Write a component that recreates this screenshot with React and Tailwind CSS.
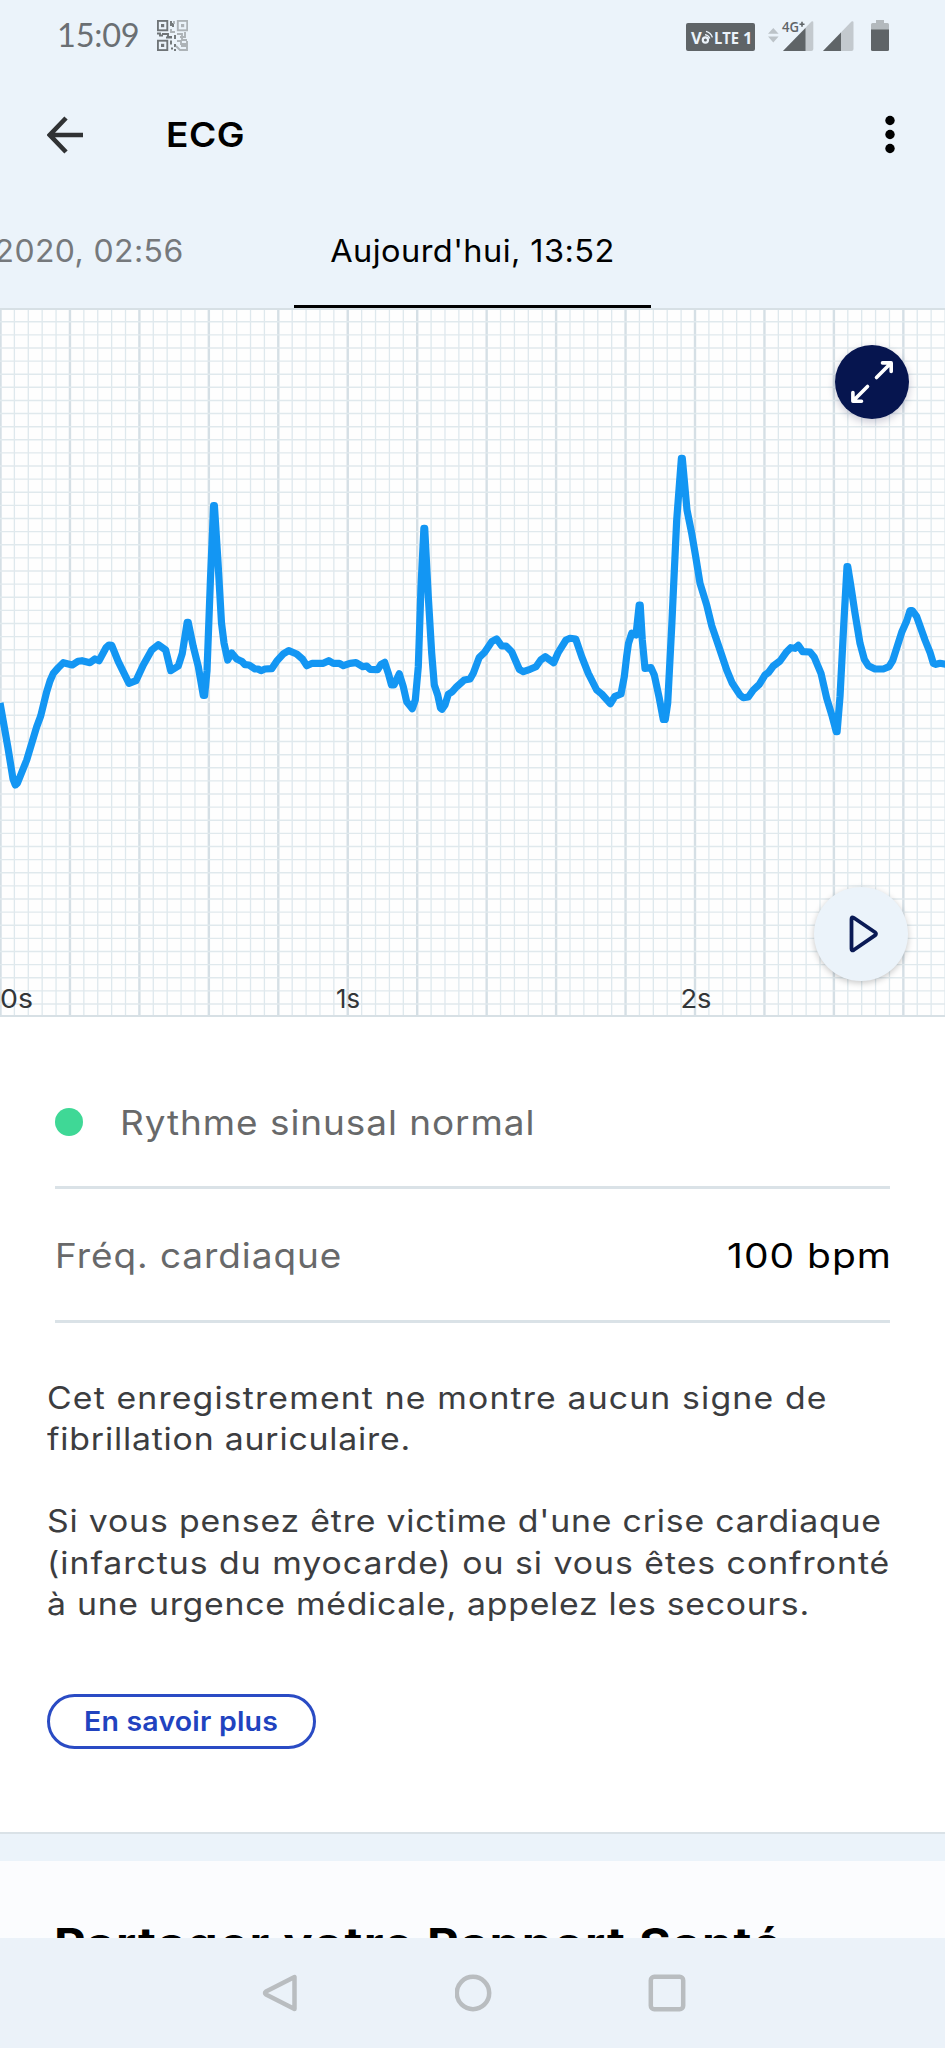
import { useState } from 'react';

// [x, y] samples of the trace, in chart pixels
const SAMPLES = [
  [0, 395], [8, 440], [13, 471], [15.3, 477], [17.5, 475], [26.7, 452], [36.7, 418.7], [40.7, 408], [46.7, 383.7],
  [50, 373], [53.3, 365.3], [58, 360], [63.3, 354.7], [72.3, 357], [78, 353.3], [82, 352.7], [90, 354.7], [95, 351],
  [99, 352.7], [106, 339.7], [109, 337], [111.7, 337.3], [118.3, 353.7], [129, 375.3], [136, 372.7],
  [143.3, 357], [151.7, 342], [158.3, 336.7], [165.7, 342], [170.7, 362.7], [178.3, 358],
  [182.3, 345.3], [187.2, 314.3], [188.2, 314.3], [193.3, 338.7], [198.3, 358.7], [203.3, 387.5], [204.6, 387.5],
  [207, 363], [210.5, 270], [213.6, 197.5], [214.4, 197.5], [218, 254], [221.5, 315], [224, 335], [227.7, 352],
  [231.7, 345], [236.7, 351], [242, 353.5], [245, 356.7], [249, 357], [255, 361], [258, 361], [261, 362.7],
  [265, 361], [271.7, 360.7], [276.7, 353.2], [283.3, 345.8], [288.7, 342.7], [296.7, 346], [302.7, 351.3],
  [306.7, 357.7], [312.3, 355.3], [323.3, 355.3], [328.7, 352.7], [333.3, 355.3], [339.3, 355.3],
  [343.3, 357.7], [350, 355.3], [356, 354.7], [362.7, 358.7], [366.7, 358], [370, 361.3], [377.7, 361.7],
  [381, 356.3], [384.7, 354.3], [388.3, 365.3], [391.5, 377], [394, 377], [399.3, 365.7], [403.3, 378.7],
  [406.7, 393.7], [412.3, 400.7], [415.3, 392], [418.3, 358.7], [421, 278.7], [423.9, 220.3],
  [424.7, 220.3], [428.3, 288.7], [431.7, 345.3], [434.3, 377], [437.7, 387], [440.5, 400], [442, 401.3],
  [445, 397], [448.3, 386.3], [452.3, 383.7], [456.7, 378.7], [464.3, 372], [470, 371], [473.3, 365.3],
  [479.3, 349.3], [484.3, 344.7], [491.7, 333.7], [496.7, 331], [501.7, 338], [506, 338],
  [511.7, 343.7], [519.3, 361.3], [523.3, 363.7], [530, 361.3], [536, 358.7], [540.7, 352], [545.3, 348.7],
  [553.7, 354.7], [558.3, 344.3], [566, 332], [570, 330.3], [575.7, 331], [581.7, 348.7],
  [588.3, 365.3], [596.7, 382], [601.7, 386], [610.3, 395.7], [615, 388.3], [621, 386],
  [624.3, 368.7], [626.7, 348], [628.5, 335.3], [631.7, 325.3], [636, 327], [639.2, 297], [640.2, 297], [642.3, 332],
  [645, 360.3], [651, 359.7], [654.3, 367], [659.3, 390.3], [663.3, 411.5], [665.3, 411.5],
  [667.7, 395.3], [671.7, 318.7], [676.7, 212], [681.4, 150.3], [682.3, 150.3], [687, 202],
  [691.7, 225.3], [695.7, 248.7], [700, 275.3], [706.7, 297], [711.7, 317.7], [720, 342],
  [726.7, 362], [732.3, 375.3], [740, 387], [743.3, 389.7], [748.3, 389], [753.3, 382],
  [759.3, 376.3], [765, 367], [768.5, 364.5], [773.3, 358], [780, 353], [786.7, 343.7], [790.7, 339.7],
  [795, 340.3], [798.3, 337.3], [802.7, 343.7], [810, 344], [814.3, 349.3], [821, 365.3],
  [826.7, 390.3], [832.3, 408.7], [836.3, 423.7], [837.1, 423.7], [840, 388.7], [844, 312],
  [847, 258.7], [847.8, 258.7], [851, 278.7], [855, 305.3], [860, 335.3], [864.3, 351.3],
  [868.3, 357.7], [875, 361], [883.3, 361], [889, 358.7], [892.7, 352.7], [901.7, 324.3],
  [906.7, 313], [910, 302.5], [912.3, 302.5], [916.7, 308.7], [925, 332], [930, 344.3], [933.3, 355.3],
  [936, 356.3], [940, 355.3], [947, 356.3],
];

const COLUMN = 13.89;
const ROW = 13.12;

const TABS = [
  { id: 'previous', label: '2020, 02:56' },
  { id: 'today', label: "Aujourd'hui, 13:52" },
];

const QrIcon = () => (
  <svg width="31" height="31" viewBox="0 0 31 31" fill="none" className="ml-[17px]">
    <g stroke="#6f7477" strokeWidth="1.9">
      <rect x="0.9" y="0.9" width="9.4" height="9.4" />
      <rect x="0.9" y="20.7" width="9.4" height="9.4" />
      <path d="M0 13.5h3v2h3M5 14h6v3h4M14 1v5M16 3v4M14 20.5v4M18 15v4M14 28.5h2M18 24v3M9 17.5h6M18 29v2" />
    </g>
    <g fill="#6f7477">
      <rect x="4" y="4" width="3.2" height="3.2" />
      <rect x="4" y="23.8" width="3.2" height="3.2" />
    </g>
    <g stroke="#adb3b7" strokeWidth="1.9">
      <rect x="20.8" y="0.9" width="9.4" height="9.4" />
      <path d="M17 1v3M14 9v3h4M20 14h5v3h-2M28 12v5h-3v3h5M20 21h4v3h6v-3M19 26l4 4h7v-4h-6" />
    </g>
    <rect x="24" y="4" width="3.2" height="3.2" fill="#adb3b7" />
  </svg>
);

const StatusBar = () => (
  <div className="flex h-[70px] items-center pl-[57px] pr-[56px] text-[#5f6467]">
    <span className="font-['Lato'] text-[32.5px] leading-none tracking-[-0.2px] text-[#6a6f73]">15:09</span>
    <QrIcon />
    <div className="ml-auto flex items-start">
      <svg width="69" height="28" viewBox="0 0 69 28" className="mt-[3px]">
        <rect width="69" height="28" rx="2" fill="#5f6467" />
        <g fill="#ebf3fa" fontFamily="Open Sans" fontWeight="700" fontSize="16.5">
          <text x="5" y="20.5">V</text>
          <text x="28" y="20.5" textLength="25" lengthAdjust="spacingAndGlyphs">LTE</text>
          <text x="57" y="20.5">1</text>
        </g>
        <g fill="none" stroke="#ebf3fa">
          <circle cx="19.4" cy="17" r="2.6" strokeWidth="2.2" />
          <path d="M19 11.6a6 6 0 0 1 4.8 4M20 8.4a9 9 0 0 1 6.4 6" strokeWidth="1.4" />
        </g>
      </svg>
      <svg width="11" height="15" viewBox="0 0 11 15" className="ml-[13px] mt-[8px]" fill="#bcc3c8">
        <path d="M0 5.8 5.3 0l5.3 5.8zM0 8.6h10.6L5.3 14.4z" />
      </svg>
      <svg width="33" height="31" viewBox="-1 0 33 31" className="ml-[2px] overflow-visible">
        <path d="M1 31 29.5 1.5q1.8-1 1.8 1V29q0 2-2 2z" fill="#c3c9ce" />
        <path d="M1 31 23.500 8v23z" fill="#5f6467" />
        <text x="0" y="12" fontFamily="Open Sans" fontWeight="600" fontSize="14" fill="#5f6467" textLength="17" lengthAdjust="spacingAndGlyphs">4G</text>
        <path d="M17.5 4.2h5M20 1.7v5" stroke="#5f6467" strokeWidth="1.6" />
      </svg>
      <svg width="31" height="31" viewBox="0 0 31 31" className="ml-[9px]">
        <path d="M0 31 28.5 1.5q2-1 2 1V29q0 2-2 2z" fill="#c3c9ce" />
        <path d="M0 31 18 12.5V31z" fill="#5f6467" />
      </svg>
      <svg width="18" height="31" viewBox="0 0 18 31" className="ml-[17px]">
        <path d="M5 0h8v3h3.5q1.5 0 1.5 1.5V10H0V4.5Q0 3 1.5 3H5z" fill="#b3b9bd" />
        <path d="M0 9.5h18v20q0 1.5-1.5 1.5h-15Q0 31 0 29.5z" fill="#5f6467" />
      </svg>
    </div>
  </div>
);

const AppBar = () => (
  <div className="flex h-[130px] items-center pl-[47px] pr-[50px]">
    <svg width="37" height="38" viewBox="0 0 37 38" fill="none" stroke="#303234" strokeWidth="4.6">
      <path d="M36 19H3M19 2 2.8 19 19 36" />
    </svg>
    <h1 className="ml-[82px] origin-left scale-x-[1.09] text-[34px] font-semibold leading-none tracking-[0.5px] text-black">
      ECG
    </h1>
    <svg width="10" height="40" viewBox="0 0 10 40" className="ml-auto">
      <circle cx="5" cy="5.5" r="4.7" />
      <circle cx="5" cy="19.5" r="4.7" />
      <circle cx="5" cy="33.5" r="4.7" />
    </svg>
  </div>
);

const EcgChart = () => {
  const columns = Array.from({ length: 69 }, (_, i) => i);
  const rows = Array.from({ length: 54 }, (_, i) => i);

  return (
    <div className="relative h-[709px] bg-[#fefefe]">
      <svg width="945" height="709" viewBox="0 0 945 709">
        {columns.map((i) => (
          <path
            key={i}
            d={`M${i * COLUMN + 0.5} 0V708`}
            stroke={i % 5 === 0 ? '#d5dfe5' : '#dee8ed'}
            strokeWidth={i % 5 === 0 ? 2.4 : 1.3}
          />
        ))}
        {rows.map((i) => (
          <path key={i} d={`M0 ${i * ROW + 0.6}H945`} stroke="#e0e9ed" strokeWidth="1.4" />
        ))}
        <path d="M0 1H945M0 708H945" stroke="#d7e0e5" strokeWidth="2" />
        <polyline
          points={SAMPLES.map((p) => p.join(',')).join(' ')}
          fill="none"
          stroke="#1396f3"
          strokeWidth="7.2"
          strokeLinejoin="round"
        />
        <g fill="#333638" fontSize="26" className="font-['Inter']">
          <text x="0" y="699.5" textLength="33" lengthAdjust="spacingAndGlyphs">0s</text>
          <text x="336" y="699.5" textLength="24" lengthAdjust="spacingAndGlyphs">1s</text>
          <text x="680.5" y="699.5" textLength="31" lengthAdjust="spacingAndGlyphs">2s</text>
        </g>
      </svg>

      <button className="absolute left-[835px] top-[37px] flex size-[74px] items-center justify-center rounded-full bg-[#06154f] shadow-[0_3px_8px_rgba(0,0,60,0.22)]">
        <svg width="42" height="42" viewBox="0 0 42 42" fill="none" stroke="#fff" strokeWidth="3.6" strokeLinecap="round" strokeLinejoin="round">
          <path d="M25.5 16.5 39 3M31.5 1.9H40.2V10.5M16.5 25.5 3 39M1.9 31.5V40.2H10.5" />
        </svg>
      </button>
      <button className="absolute left-[814px] top-[579px] flex size-[94px] items-center justify-center rounded-full bg-[#ebf3fa] shadow-[0_2px_6px_rgba(0,0,0,0.22)]">
        <svg width="32" height="40" viewBox="0 0 32 40" fill="none" stroke="#0a1a55" strokeWidth="3.8" strokeLinejoin="round" className="ml-[5px]">
          <path d="M3.5 5q0-2.5 2.2-1.2L27 18.2q2 1.6 0 3.2L5.7 36q-2.2 1.3-2.2-1.2z" />
        </svg>
      </button>
    </div>
  );
};

const NavigationBar = () => (
  <div className="flex h-[110px] shrink-0 items-center justify-between bg-[#ebf2f9] pl-[262px] pr-[259px]">
    <svg width="37" height="40" viewBox="0 0 37 40" fill="none" stroke="#b9bdc0" strokeWidth="4.5" strokeLinejoin="round">
      <path d="M32.5 4v32L4 21.500q-2-1.500 0-3z" />
    </svg>
    <svg width="38" height="38" viewBox="0 0 38 38" fill="none" stroke="#b9bdc0" strokeWidth="4.5">
      <circle cx="18" cy="19" r="16.2" />
    </svg>
    <svg width="38" height="38" viewBox="0 0 38 38" fill="none" stroke="#b9bdc0" strokeWidth="4.5">
      <rect x="2.8" y="2.8" width="32.4" height="32.4" rx="3.5" />
    </svg>
  </div>
);

const App = () => {
  const [activeTab, setActiveTab] = useState('today');

  return (
    <div className="flex h-[2048px] w-[945px] flex-col overflow-hidden bg-white font-['Inter',sans-serif]">
      <header className="bg-[#ebf3fa]">
        <StatusBar />
        <AppBar />
        <div className="flex h-[108px]">
          {TABS.map((tab) => (
            <button
              key={tab.id}
              onClick={() => setActiveTab(tab.id)}
              className={`flex h-full shrink-0 items-center whitespace-nowrap text-[31px] tracking-[0.4px] ${
                tab.id === activeTab
                  ? 'w-[357px] justify-center border-b-[3px] border-black pb-[3px] text-black'
                  : 'w-[294px] justify-end pb-[6px] pr-[110px] text-[#76797c]'
              }`}
            >
              <span className={tab.id === activeTab ? 'scale-x-[1.05]' : 'origin-right scale-x-[1.03]'}>
                {tab.label}
              </span>
            </button>
          ))}
        </div>
      </header>

      <EcgChart />

      <section className="px-[55px] pt-[41px]">
        <div className="flex h-[131px] items-center border-b-[3px] border-[#dae2e7] text-[34.5px] text-[#68696a]">
          <span className="size-[28px] rounded-full bg-[#3fd896]" />
          <span className="ml-[37px] origin-left scale-x-[1.07] pt-px tracking-[0.9px]">Rythme sinusal normal</span>
        </div>
        <div className="flex h-[134px] items-center justify-between border-b-[3px] border-[#dae2e7] pt-[3px] text-[34.5px] tracking-[0.9px]">
          <span className="origin-left scale-x-[1.07] text-[#68696a]">Fréq. cardiaque</span>
          <span className="-mr-[2px] origin-right scale-x-[1.13] text-black">100 bpm</span>
        </div>
      </section>

      <section className="px-[47px] pt-[54px]">
        <div className="origin-left scale-x-[1.09] whitespace-nowrap text-[31px] leading-[41.2px] text-[#3c3d3f]">
          <p className="tracking-[1.05px]">Cet enregistrement ne montre aucun signe de</p>
          <p className="tracking-[0.75px]">fibrillation auriculaire.</p>
          <p className="mt-[41px] tracking-[0.76px]">Si vous pensez être victime d'une crise cardiaque</p>
          <p className="tracking-[0.9px]">(infarctus du myocarde) ou si vous êtes confronté</p>
          <p className="tracking-[0.67px]">à une urgence médicale, appelez les secours.</p>
        </div>
        <button className="mt-[70px] flex h-[55px] w-[269px] items-center justify-center rounded-full border-[3px] border-[#2a4bc4] pt-[2px] text-[27px] font-semibold tracking-[0.2px] text-[#2143bf]">
          <span className="scale-x-[1.055]">En savoir plus</span>
        </button>
      </section>

      <div className="mt-auto h-[29px] shrink-0 border-t-[2px] border-[#dae2e7] bg-[#ebf3fa]" />
      <section className="h-[77px] shrink-0 overflow-hidden bg-[#fbfcfe] pl-[54px] pt-[57px]">
        <h2 className="origin-left scale-x-[1.132] whitespace-nowrap text-[43px] font-bold leading-[50px] tracking-[1.2px] text-black">
          Partager votre Rapport Santé
        </h2>
      </section>
      <NavigationBar />
    </div>
  );
};

export default App;
